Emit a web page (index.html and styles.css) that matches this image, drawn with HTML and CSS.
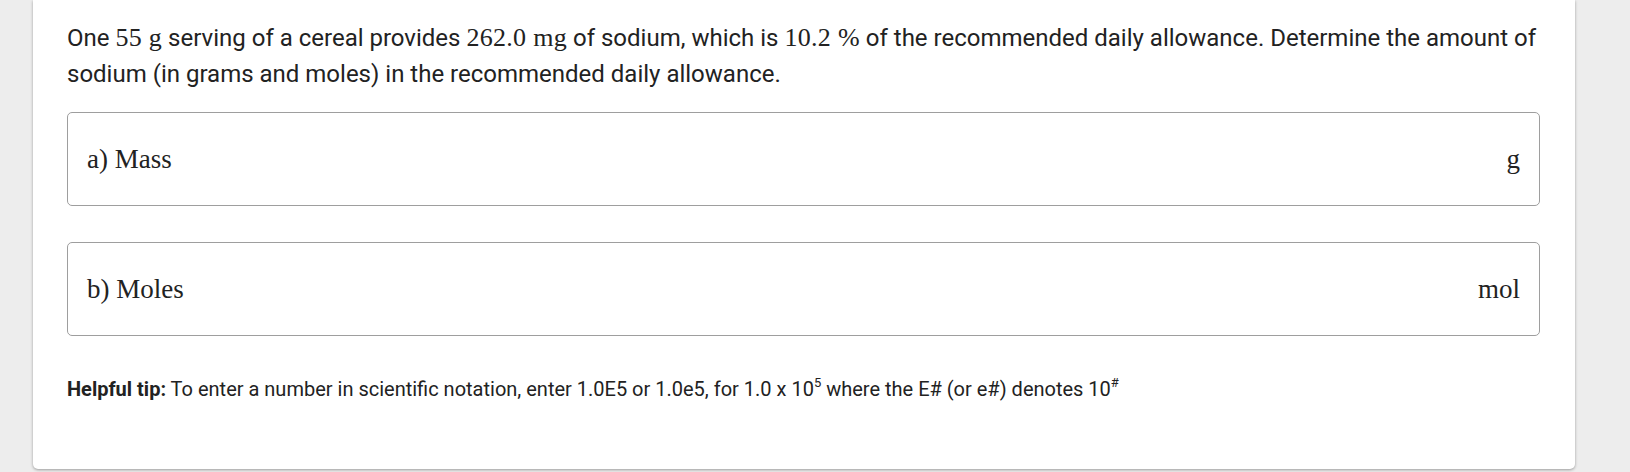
FILE: index.html
```html
<!DOCTYPE html>
<html>
<head>
<meta charset="utf-8">
<link rel="stylesheet" href="styles.css">
</head>
<body>
<div class="page">
  <div class="card">
    <p class="question">One <span class="m">55 g</span> serving of a cereal provides <span class="m">262.0 mg</span> of sodium, which is <span class="m">10.2 %</span> of the recommended daily allowance. Determine the amount of sodium (in grams and moles) in the recommended daily allowance.</p>
    <div class="answer">
      <span class="label">a) Mass</span>
      <span class="unit">g</span>
    </div>
    <div class="answer">
      <span class="label">b) Moles</span>
      <span class="unit">mol</span>
    </div>
    <p class="tip"><b>Helpful tip:</b> To enter a number in scientific notation, enter 1.0E5 or 1.0e5, for 1.0 x 10<sup>5</sup> where the E# (or e#) denotes 10<sup>#</sup></p>
  </div>
</div>
</body>
</html>
```
FILE: styles.css
```css
html, body {
  margin: 0;
  padding: 0;
  background: #ededed;
  height: 100%;
}
.page {
  padding: 0 55px 0 33px;
}
.card {
  background: #ffffff;
  border-radius: 0 0 5px 5px;
  box-shadow: 0 1px 3px rgba(0,0,0,0.35);
  padding: 20px 35px 68px 34px;
  font-family: Roboto, "Liberation Sans", sans-serif;
  color: #222;
}
.question {
  margin: 0 0 20px 0;
  font-size: 24px;
  line-height: 36px;
}
.m {
  font-family: "Liberation Serif", serif;
  font-size: 26px;
  line-height: 1;
  letter-spacing: 0.3px;
}
.answer {
  display: flex;
  justify-content: space-between;
  align-items: center;
  height: 92px;
  border: 1.5px solid #9e9e9e;
  border-radius: 5px;
  padding: 0 19px;
  margin-bottom: 36px;
  font-family: "Liberation Serif", serif;
  font-size: 27px;
  color: #222;
}
.answer + .answer {
  margin-bottom: 41px;
}
.tip {
  margin: 0;
  font-size: 20px;
  line-height: 24px;
}
.tip b {
  font-weight: 700;
}
.tip sup {
  font-size: 13px;
  line-height: 0;
  vertical-align: 9px;
}
```
